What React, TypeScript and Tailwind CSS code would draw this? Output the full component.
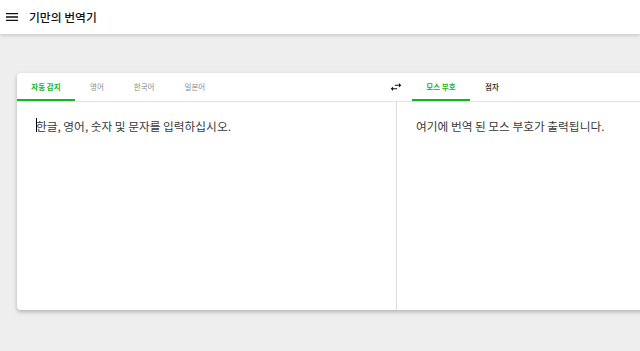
import type { ReactNode } from "react";

const FONT = '"Noto Sans CJK KR", "Noto Sans", sans-serif';

function Tab({ label, active = false }: { label: string; active?: boolean }) {
  return (
    <div
      className={`relative flex h-full items-center justify-center whitespace-nowrap text-[7.5px] ${
        active ? "w-[58px] font-bold text-[#16b522]" : "px-[15px] text-[#8a8a8a]"
      }`}
    >
      {label}
      {active ? <span className="absolute bottom-0 left-0 h-[2px] w-full bg-[#16b522]" /> : null}
    </div>
  );
}

function Panel({ children, divider = false }: { children: ReactNode; divider?: boolean }) {
  return (
    <div
      className={`w-[380px] shrink-0 pl-[19px] pt-[16px] text-[11.7px] leading-[16px] text-[#3a3a3a] ${
        divider ? "border-r border-[#dcdcdc]" : ""
      }`}
    >
      {children}
    </div>
  );
}

export default function App() {
  return (
    <div className="h-[351px] w-[640px] overflow-hidden bg-[#eeeeee]" style={{ fontFamily: FONT }}>
      <header className="relative z-10 flex h-[34px] items-center bg-white shadow-[0_1px_4px_rgba(0,0,0,0.2)]">
        <svg viewBox="0 0 24 24" className="ml-[4px] h-[16px] w-[16px]" fill="#111">
          <path d="M3 18h18v-2H3v2zm0-5h18v-2H3v2zm0-7v2h18V6H3z" />
        </svg>
        <h1 className="ml-[9px] text-[11.8px] font-medium text-[#111]">기만의 번역기</h1>
      </header>

      <main className="pl-[17px] pt-[39px]">
        <section className="flex h-[237px] w-[760px] flex-col rounded-[4px] bg-white shadow-[0_2px_4px_rgba(0,0,0,0.25)]">
          <nav className="flex h-[29px] shrink-0 border-b border-[#e3e3e3]">
            <div className="flex w-[363px] shrink-0">
              <Tab label="자동 감지" active />
              <Tab label="영어" />
              <Tab label="한국어" />
              <Tab label="일본어" />
            </div>
            <div className="flex w-[32px] shrink-0 items-center justify-center">
              <svg viewBox="0 0 24 24" className="h-[14px] w-[14px]" fill="#111">
                <path d="M6.99 11L3 15l3.99 4v-3H14v-2H6.99v-3zM21 9l-3.99-4v3H10v2h7.01v3L21 9z" />
              </svg>
            </div>
            <div className="flex">
              <Tab label="모스 부호" active />
              <div className="flex h-full items-center whitespace-nowrap px-[15px] text-[7.5px] font-medium text-[#222]">
                점자
              </div>
            </div>
          </nav>
          <div className="flex flex-1">
            <Panel divider>
              <span className="relative">
                <span className="absolute left-0 top-[1px] h-[14px] w-px bg-black" />
                한글, 영어, 숫자 및 문자를 입력하십시오.
              </span>
            </Panel>
            <Panel>여기에 번역 된 모스 부호가 출력됩니다.</Panel>
          </div>
        </section>
      </main>
    </div>
  );
}
